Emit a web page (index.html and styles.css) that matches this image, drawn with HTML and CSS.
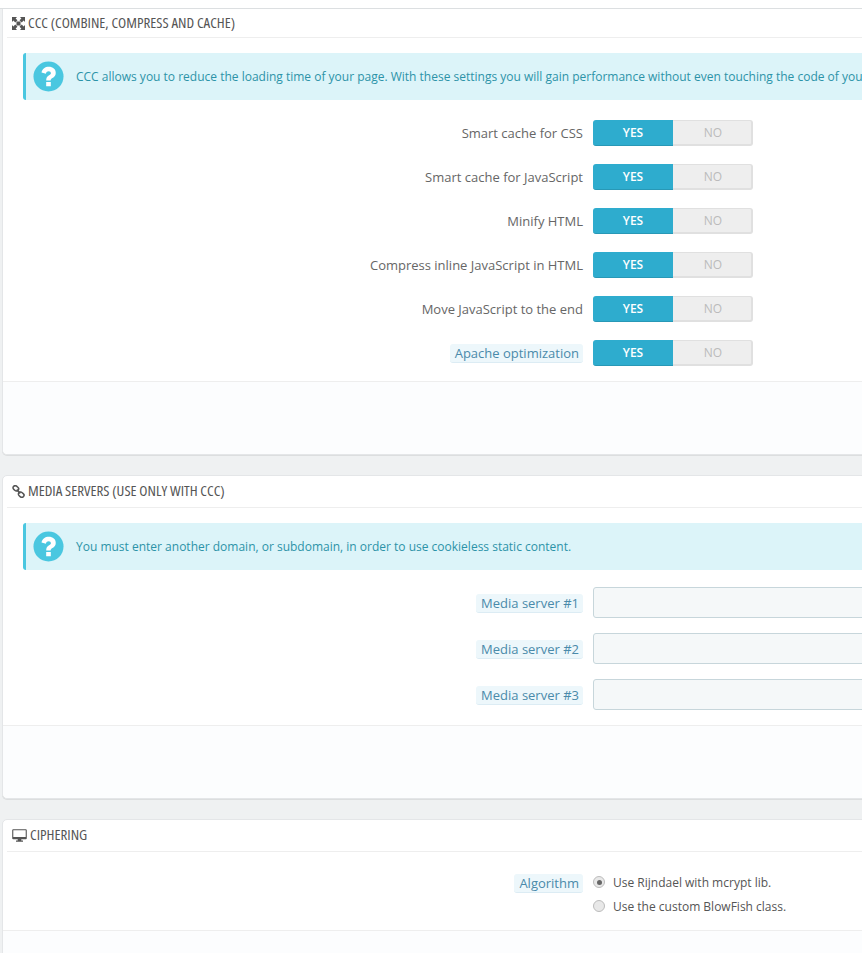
FILE: index.html
```html
<!DOCTYPE html>
<html lang="en">
<head>
<meta charset="utf-8">
<title>Performance</title>
<link rel="stylesheet" href="styles.css">
</head>
<body>
<div class="topbar"></div>
<main class="content">

<section class="panel panel-first">
  <h3 class="panel-heading">
    <svg class="head-icon" viewBox="0 0 14 14"><path d="M0 0H5.4L3.9 1.5 5.9 3.5 3.5 5.9 1.5 3.9 0 5.4ZM14 0V5.4L12.5 3.9 10.5 5.9 8.1 3.5 10.1 1.5 8.6 0ZM14 14H8.6L10.1 12.5 8.1 10.5 10.5 8.1 12.5 10.1 14 8.6ZM0 14V8.6L1.5 10.1 3.5 8.1 5.9 10.5 3.9 12.5 5.4 14ZM4.8 4.8H9.2V9.2H4.8Z"/></svg>
    <span class="heading-text">CCC (Combine, Compress and Cache)</span>
  </h3>
  <div class="alert">
    <svg class="alert-icon" viewBox="0 0 32 32"><circle cx="16" cy="16" r="15.5" fill="#4ac7e0"/><path d="M8.8 11.8C9.7 8 12.6 6 16.3 6 20.5 6 23.5 8.5 23.5 12.3 23.5 15 22 16.3 20.1 17.5 18.7 18.4 18.2 19 18.2 20.2H13.6C13.6 17.4 14.5 16.1 16.6 14.8 17.9 14 18.5 13.5 18.5 12.6 18.5 11.4 17.6 10.6 16.2 10.6 14.8 10.6 13.8 11.4 13.3 13.1ZM13.6 21.6H18.4V26H13.6Z" fill="#fff"/></svg>
    <p class="alert-text">CCC allows you to reduce the loading time of your page. With these settings you will gain performance without even touching the code of your theme. Make sure, however, that your theme is compatible.</p>
  </div>
  <div class="rows rows-switch">
    <div class="row"><label class="row-label">Smart cache for CSS</label><div class="switch"><span class="on">YES</span><span class="off">NO</span></div></div>
    <div class="row"><label class="row-label">Smart cache for JavaScript</label><div class="switch"><span class="on">YES</span><span class="off">NO</span></div></div>
    <div class="row"><label class="row-label">Minify HTML</label><div class="switch"><span class="on">YES</span><span class="off">NO</span></div></div>
    <div class="row"><label class="row-label">Compress inline JavaScript in HTML</label><div class="switch"><span class="on">YES</span><span class="off">NO</span></div></div>
    <div class="row"><label class="row-label">Move JavaScript to the end</label><div class="switch"><span class="on">YES</span><span class="off">NO</span></div></div>
    <div class="row"><label class="row-label"><span class="hint">Apache optimization</span></label><div class="switch"><span class="on">YES</span><span class="off">NO</span></div></div>
  </div>
  <div class="panel-footer"></div>
</section>

<section class="panel">
  <h3 class="panel-heading">
    <svg class="head-icon" viewBox="0 0 14 14"><g fill="none" stroke="#555" stroke-width="1.7"><rect x="0.9" y="1.3" width="6.4" height="4.6" rx="2.3" transform="rotate(40 4.1 3.6)"/><rect x="6.7" y="8.1" width="6.4" height="4.6" rx="2.3" transform="rotate(40 9.9 10.4)"/><path d="M5 5L9 9"/></g></svg>
    <span class="heading-text">Media servers (use only with CCC)</span>
  </h3>
  <div class="alert alert-media">
    <svg class="alert-icon" viewBox="0 0 32 32"><circle cx="16" cy="16" r="15.5" fill="#4ac7e0"/><path d="M8.8 11.8C9.7 8 12.6 6 16.3 6 20.5 6 23.5 8.5 23.5 12.3 23.5 15 22 16.3 20.1 17.5 18.7 18.4 18.2 19 18.2 20.2H13.6C13.6 17.4 14.5 16.1 16.6 14.8 17.9 14 18.5 13.5 18.5 12.6 18.5 11.4 17.6 10.6 16.2 10.6 14.8 10.6 13.8 11.4 13.3 13.1ZM13.6 21.6H18.4V26H13.6Z" fill="#fff"/></svg>
    <p class="alert-text">You must enter another domain, or subdomain, in order to use cookieless static content.</p>
  </div>
  <div class="rows rows-input">
    <div class="row"><label class="row-label"><span class="hint">Media server #1</span></label><input class="text-input" type="text"></div>
    <div class="row"><label class="row-label"><span class="hint">Media server #2</span></label><input class="text-input" type="text"></div>
    <div class="row"><label class="row-label"><span class="hint">Media server #3</span></label><input class="text-input" type="text"></div>
  </div>
  <div class="panel-footer"></div>
</section>

<section class="panel">
  <h3 class="panel-heading">
    <svg class="head-icon head-icon-wide" viewBox="0 0 15 13"><path d="M1.2 0.2H13.8A1 1 0 0 1 14.8 1.2V9.2A1 1 0 0 1 13.8 10.2H9.3V11.4H11V12.8H4V11.4H5.7V10.2H1.2A1 1 0 0 1 0.2 9.2V1.2A1 1 0 0 1 1.2 0.2ZM1.3 1.3V8H13.7V1.3Z" fill-rule="evenodd"/></svg>
    <span class="heading-text">Ciphering</span>
  </h3>
  <div class="rows rows-radio">
    <div class="row row-radio">
      <label class="row-label"><span class="hint">Algorithm</span></label>
      <div class="radio-list">
        <div class="radio-item"><span class="radio radio-on"></span><span>Use Rijndael with mcrypt lib.</span></div>
        <div class="radio-item"><span class="radio"></span><span>Use the custom BlowFish class.</span></div>
      </div>
    </div>
  </div>
  <div class="panel-footer"></div>
</section>

</main>
</body>
</html>
```
FILE: styles.css
```css
html, body {
  margin: 0;
  padding: 0;
  height: 953px;
  overflow: hidden;
}
body {
  background: #eff1f2;
  font-family: "Open Sans", sans-serif;
  font-size: 12px;
  color: #555;
}
.topbar {
  height: 8px;
  background: #fff;
  border-bottom: 1px solid #dcdfe1;
}
.content {
  width: 1100px;
  padding-left: 2px;
}
.panel {
  background: #fff;
  border: 1px solid #e4e6e8;
  border-radius: 5px;
  box-shadow: 0 1px 0 rgba(0, 0, 0, .08);
  margin-bottom: 20px;
  padding: 0 4px;
}
.panel-first {
  border-top: 0;
  border-radius: 0 0 5px 5px;
}
.panel-heading {
  display: flex;
  align-items: center;
  gap: 3px;
  height: 31px;
  margin: 0;
  padding-left: 5px;
  border-bottom: 1px solid #eee;
  font-family: "Open Sans", sans-serif;
  font-stretch: 75%;
  font-size: 15px;
  font-weight: 400;
  text-transform: uppercase;
  color: #555;
}
.panel-first .panel-heading {
  height: 28px;
}
.heading-text {
  display: block;
  white-space: nowrap;
  line-height: 16px;
  margin-top: -3px;
}
.head-icon {
  width: 13px;
  height: 13px;
  fill: #555;
  flex: none;
}
.head-icon-wide {
  width: 15px;
  height: 13px;
}
.alert {
  display: flex;
  align-items: center;
  gap: 12px;
  height: 47px;
  margin: 15px 0 20px 16px;
  padding-left: 7px;
  background: #dcf4f9;
  border-left: 3px solid #4ac7e0;
  border-radius: 3px;
}
.alert-media {
  margin-bottom: 17px;
}
.alert-icon {
  width: 31px;
  height: 31px;
  flex: none;
}
.alert-text {
  margin: 0;
  white-space: nowrap;
  color: #2c93a8;
  font-size: 12px;
}
.rows {
  display: flex;
  flex-direction: column;
}
.rows-switch {
  gap: 18px;
}
.rows-input {
  gap: 15px;
}
.rows-input .row-label {
  padding-top: 2px;
  box-sizing: border-box;
}
.rows-radio {
  padding-top: 21px;
}
.row {
  display: flex;
  align-items: center;
  gap: 10px;
}
.row-radio {
  align-items: flex-start;
}
.row-label {
  width: 576px;
  flex: none;
  text-align: right;
  font-size: 13px;
  color: #666;
}
.hint {
  display: inline-block;
  height: 19px;
  line-height: 18px;
  padding: 0 4px 0 5px;
  background: #edf7fb;
  color: #4a8aaa;
  border-bottom: 1px solid #dcecf4;
  border-radius: 3px;
  box-sizing: border-box;
}
.row-radio .row-label {
  padding-top: 1px;
  box-sizing: border-box;
}
.switch {
  display: flex;
  width: 160px;
  height: 26px;
  text-align: center;
  font-size: 12px;
  flex: none;
}
.on {
  width: 80px;
  line-height: 25px;
  background: #2eacce;
  border-bottom: 1px solid #2898b6;
  border-radius: 3px 0 0 3px;
  color: #fff;
  font-weight: 600;
}
.off {
  width: 80px;
  padding-left: 2px;
  background: #eee;
  border: 1px solid #e0e0e0;
  border-width: 1px 2px 2px 0;
  border-radius: 0 3px 3px 0;
  color: #bbb;
  box-sizing: border-box;
  line-height: 23px;
}
.text-input {
  width: 400px;
  height: 31px;
  box-sizing: border-box;
  margin: 0;
  padding: 0 8px;
  background: #f5f8f9;
  border: 1px solid #c7d6db;
  border-radius: 3px;
  flex: none;
}
.radio-list {
  display: flex;
  flex-direction: column;
  gap: 6px;
}
.radio-item {
  display: flex;
  align-items: center;
  gap: 8px;
  height: 18px;
  font-size: 12px;
  color: #555;
}
.radio {
  width: 12px;
  height: 12px;
  box-sizing: border-box;
  border-radius: 50%;
  background: #e8e8e8;
  border: 1px solid #bcbcbc;
  flex: none;
  position: relative;
}
.radio-on::after {
  content: "";
  position: absolute;
  left: 2.5px;
  top: 2.5px;
  width: 5px;
  height: 5px;
  border-radius: 50%;
  background: #666;
}
.panel-footer {
  height: 72px;
  margin: 15px -4px 0;
  background: #fcfdfe;
  border-top: 1px solid #eee;
  border-radius: 0 0 5px 5px;
}
```
